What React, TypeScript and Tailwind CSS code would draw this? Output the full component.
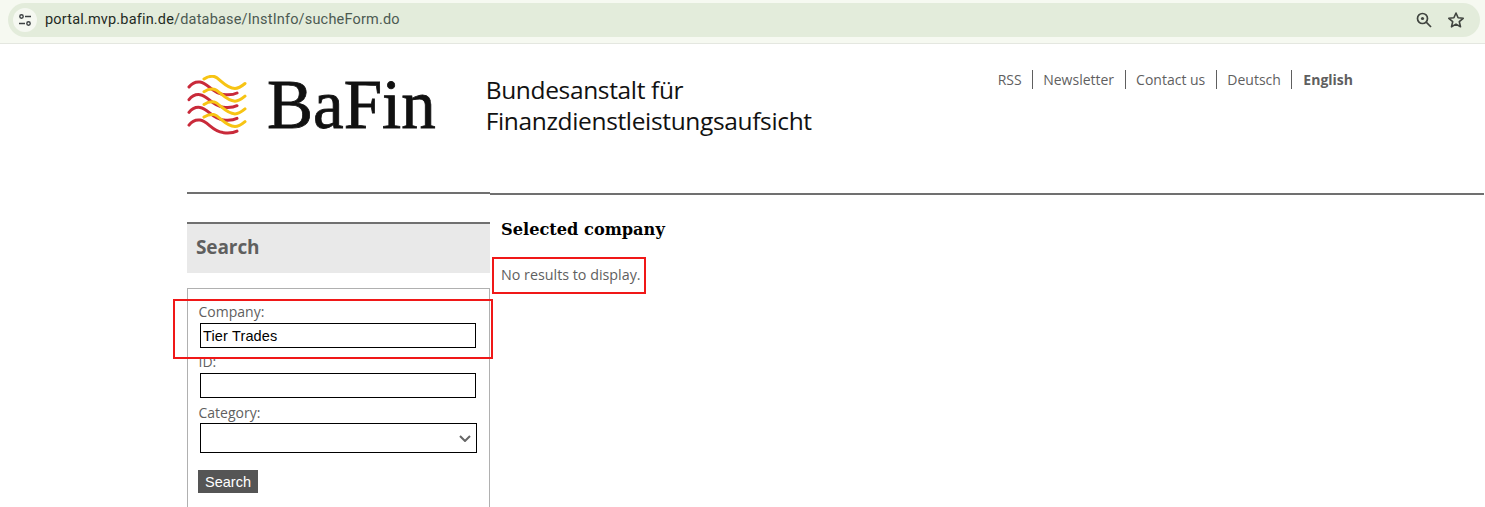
export default function App() {
  const seg = "font-['Open_Sans','Noto_Sans',sans-serif]";
  const rows = [0, 12.7, 25.4, 38.1];
  return (
    <div className={`relative h-[507px] w-[1485px] overflow-hidden bg-white ${seg}`}>
      {/* browser bar */}
      <div className="flex h-[44px] items-start border-b border-[#e4e7e0] bg-[#f6f9f1] pl-2 pr-[5px] pt-[3px]">
        <div className="flex h-[34px] flex-1 items-center rounded-full bg-[#e3ecdb] pl-[5px] pr-[15px]">
          <div className="flex h-[24px] w-[24px] items-center justify-center rounded-full bg-[#f5f8f1]">
            <svg width="14" height="14" viewBox="0 0 14 14" fill="none" stroke="#3c4043" strokeWidth="1.4">
              <circle cx="3.5" cy="3.5" r="1.7" />
              <path d="M7 3.5h6M1 10.5h6" />
              <circle cx="10.5" cy="10.5" r="1.7" />
            </svg>
          </div>
          <div className="ml-[8px] flex-1 font-['Roboto',sans-serif] text-[14.5px] leading-[20px] tracking-[0.18px] text-[#4c5a52]">
            <span className="text-[#1f2a24]">portal.mvp.bafin.de</span>/database/InstInfo/sucheForm.do
          </div>
          <svg width="18" height="18" viewBox="0 0 18 18" fill="none" stroke="#40443f" strokeWidth="1.7" className="mr-[14px]">
            <circle cx="7.5" cy="7.5" r="5" />
            <circle cx="7.5" cy="7.5" r="1.6" fill="#40443f" stroke="none" />
            <path d="M11.2 11.2L16 16" />
          </svg>
          <svg width="18" height="18" viewBox="0 0 18 18" fill="none" stroke="#40443f" strokeWidth="1.6" strokeLinejoin="round">
            <path d="M9 2l2.1 4.8 5.1.5-3.9 3.4 1.2 5.1L9 13.1l-4.5 2.7 1.2-5.1-3.9-3.4 5.1-.5z" />
          </svg>
        </div>
      </div>

      {/* header */}
      <div className="flex h-[148px] pl-[187px]">
        <div className="flex h-[100px] items-start pt-[31px]">
          <svg width="60" height="60" viewBox="0 0 60 60" fill="none" strokeWidth="3" strokeLinecap="round">
            {rows.map((y) => (
              <g key={y} transform={`translate(0 ${y})`}>
                <path d="M17 4C20 2 24 1 27 1.5C33 3 38 13 48 13.5C52 13.5 55 11 58 8.5" stroke="#f7c414" />
                <path d="M2 12C5 8 9 6.500 13 7C21 8 25 18 36 19.500C41 20 45 20.500 50 18" stroke="#c92a3a" />
              </g>
            ))}
          </svg>
          <div className="ml-[20px] mt-[-9px] font-['Liberation_Serif',serif] text-[69px] leading-[78px] text-[#111] [-webkit-text-stroke:0.8px_#111]">
            BaFin
          </div>
          <div className="ml-[50px] mt-[-1px] text-[24.5px] leading-[31px] tracking-[-0.35px] text-[#111]">
            Bundesanstalt für
            <br />
            Finanzdienstleistungsaufsicht
          </div>
        </div>
        <div className="ml-auto mr-[132px] mt-[26px] flex h-[19px] items-center text-[14px] leading-[19px] text-[#5f5f5f]">
          <span className="border-r border-[#5f5f5f] pr-[10px]">RSS</span>
          <span className="border-r border-[#5f5f5f] px-[10.500px]">Newsletter</span>
          <span className="border-r border-[#5f5f5f] px-[10.500px]">Contact us</span>
          <span className="border-r border-[#5f5f5f] px-[10.500px]">Deutsch</span>
          <span className="pl-[11px] font-bold">English</span>
        </div>
      </div>

      {/* body */}
      <div className="flex pl-[187px]">
        <div className="w-[303px] shrink-0">
          <div className="h-[2px] bg-[#707070]" />
          <div className="mt-[28px] flex h-[51px] items-center border-t-2 border-[#707070] bg-[#e9e9e9] pb-[3px] pl-[9px] text-[19px] font-bold tracking-[-0.1px] text-[#5f5f5f]">
            Search
          </div>
          <div className="mt-[15px] h-[300px] border border-[#b0b0b0] pl-[10px] pt-[13px] text-[14px] leading-[20px] text-[#5f5f5f]">
            <div className="h-[20px] pl-[0.5px]">Company:</div>
            <input
              readOnly
              value="Tier Trades"
              className="ml-[2px] mt-[1px] block h-[25px] w-[276px] border border-black pl-[2px] font-['Liberation_Sans',sans-serif] text-[14.500px] tracking-[0.15px] text-black"
            />
            <div className="mt-[4px] h-[20px] pl-[0.5px]">ID:</div>
            <input readOnly className="ml-[2px] mt-[1px] block h-[25px] w-[276px] border border-black" />
            <div className="mt-[4px] h-[20px] pl-[0.5px] pt-px">Category:</div>
            <div className="relative ml-[2px] mt-[1px] h-[30px] w-[277px]">
              <select className="block h-full w-full appearance-none border border-black bg-white" />
              <svg width="12" height="7" viewBox="0 0 12 7" fill="none" stroke="#666" strokeWidth="2" className="pointer-events-none absolute left-[259px] top-[12px]">
                <path d="M1 1l5 5 5-5" />
              </svg>
            </div>
            <button className="mt-[17px] block h-[23px] w-[60px] bg-[#555] pt-px font-['Liberation_Sans',sans-serif] text-[14.500px] leading-[22px] text-white">
              Search
            </button>
          </div>
        </div>
        <div className="flex-1 pr-px">
          <div className="mt-[1px] h-[2px] bg-[#707070]" />
          <div className="pl-[11px] pt-[24px]">
            <div className="font-['DejaVu_Serif',serif] text-[16.2px] font-bold leading-[22px] text-black">
              Selected company
            </div>
            <div className="mt-[24px] text-[14.3px] leading-[20px] text-[#5f5f5f]">No results to display.</div>
          </div>
        </div>
      </div>

      {/* annotations */}
      <div className="absolute left-[173px] top-[299px] h-[60px] w-[320px] border-2 border-[#f01818]" />
      <div className="absolute left-[492px] top-[257px] h-[37px] w-[154px] border-2 border-[#f01818]" />
    </div>
  );
}
